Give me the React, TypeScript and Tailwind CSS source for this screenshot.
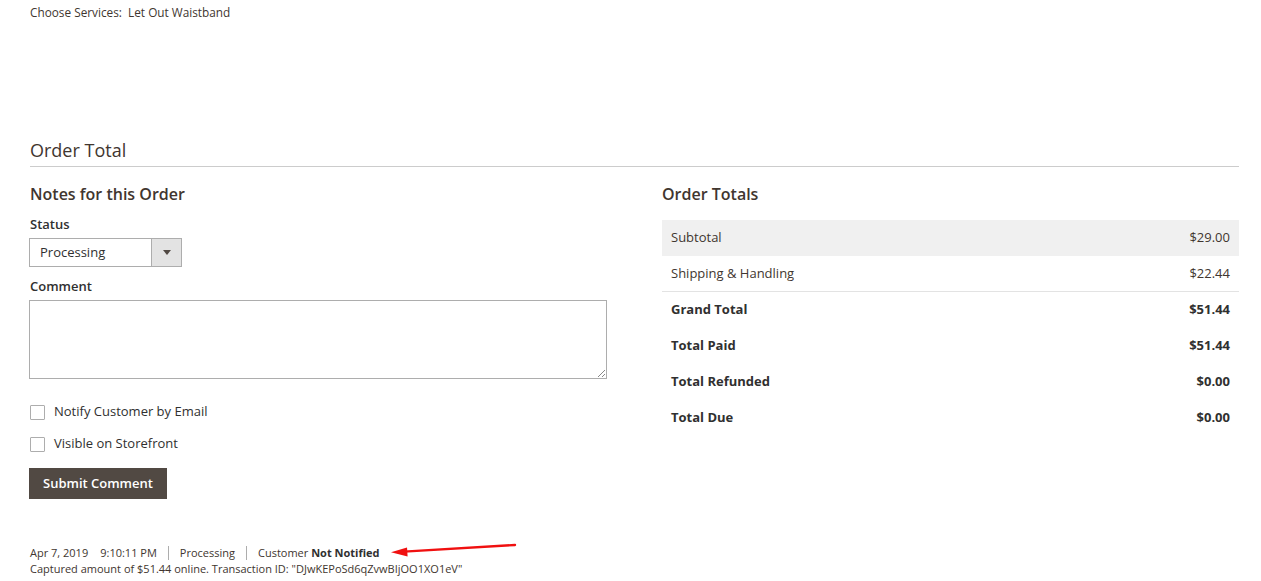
import React from "react";

const totals = [
  { label: "Subtotal", value: "$29.00", bold: false, shaded: true },
  { label: "Shipping & Handling", value: "$22.44", bold: false, shaded: false, line: true },
  { label: "Grand Total", value: "$51.44", bold: true },
  { label: "Total Paid", value: "$51.44", bold: true },
  { label: "Total Refunded", value: "$0.00", bold: true },
  { label: "Total Due", value: "$0.00", bold: true },
];

function Checkbox({ label }: { label: string }) {
  return (
    <label className="flex items-center h-[18px]">
      <span className="w-[15px] h-[15px] border border-[#adadad] bg-white rounded-[1px] mr-[9px]" />
      <span className="text-[13px] text-[#303030]">{label}</span>
    </label>
  );
}

export default function App() {
  return (
    <div
      className="min-h-screen bg-white pl-[30px] pr-[22px] text-[#303030]"
      style={{ fontFamily: '"Open Sans", "Liberation Sans", sans-serif' }}
    >
      {/* item option */}
      <div className="pt-[4px] h-[20px] text-[11.8px] leading-[16px] text-[#41362f]">
        Choose Services:&nbsp; Let Out Waistband
      </div>

      {/* ORDER TOTAL SECTION */}
      <div className="mt-[118px] border-b border-[#cccccc] pb-[3px]">
        <h2 className="text-[18px] leading-[25px] text-[#41362f]">Order Total</h2>
      </div>

      <div className="flex gap-[55px] mt-[15px]">
        {/* LEFT: notes */}
        <div className="w-[577px] shrink-0">
          <h3 className="text-[16px] leading-[24px] font-semibold text-[#41362f]">
            Notes for this Order
          </h3>

          <div className="mt-[10px] text-[13px] leading-[16px] font-semibold">Status</div>
          <div className="mt-[6px] flex w-[153px] h-[29px] border border-[#adadad] bg-white -ml-px">
            <div className="flex-1 flex items-center pl-[10px] text-[13px]">Processing</div>
            <div className="w-[30px] bg-[#e3e3e3] border-l border-[#adadad] flex items-center justify-center">
              <svg width="8" height="5" viewBox="0 0 8 5">
                <path d="M0 0h8L4 5z" fill="#514943" />
              </svg>
            </div>
          </div>

          <div className="mt-[11px] text-[13px] leading-[16px] font-semibold">Comment</div>
          <div className="mt-[6px] -ml-px w-[578px] h-[79px] border border-[#adadad] bg-white relative">
            <svg className="absolute right-[1px] bottom-[1px]" width="8" height="8" viewBox="0 0 8 8">
              <path d="M8 1L1 8M8 5L5 8" stroke="#888" strokeWidth="1" />
            </svg>
          </div>

          <div className="mt-[24px] flex flex-col gap-[14px]">
            <Checkbox label="Notify Customer by Email" />
            <Checkbox label="Visible on Storefront" />
          </div>

          <button className="mt-[15px] -ml-px h-[31px] px-[14px] bg-[#514943] text-white text-[13px] font-semibold">
            Submit Comment
          </button>

          {/* history */}
          <div className="mt-[46px] text-[11px] leading-[16px] text-[#41362f] relative">
            <div className="flex items-center">
              <span>Apr 7, 2019</span>
              <span className="ml-[12px]">9:10:11 PM</span>
              <span className="mx-[11px] w-px h-[14px] bg-[#adadad]" />
              <span>Processing</span>
              <span className="mx-[11px] w-px h-[14px] bg-[#adadad]" />
              <span>
                Customer <b className="font-bold text-[#303030]">Not Notified</b>
              </span>
            </div>
            <div>Captured amount of $51.44 online. Transaction ID: "DJwKEPoSd6qZvwBIjOO1XO1eV"</div>
            <svg className="absolute left-[360px] top-[-4px]" width="130" height="20" viewBox="0 0 130 20">
              <path d="M125 4L14 10.6" stroke="#f01010" strokeWidth="2.4" fill="none" strokeLinecap="round" />
              <path d="M1 11.3L17 6.5L17.6 15.5z" fill="#f01010" />
            </svg>
          </div>
        </div>

        {/* RIGHT: totals */}
        <div className="flex-1">
          <h3 className="text-[16px] leading-[24px] font-semibold text-[#41362f]">Order Totals</h3>
          <div className="mt-[14px]">
            {totals.map((t) => (
              <div
                key={t.label}
                className={`flex justify-between items-center h-[36px] px-[9px] text-[13px] ${
                  t.shaded ? "bg-[#f0f0f0]" : ""
                } ${t.line ? "border-b border-[#e3e3e3]" : ""} ${
                  t.bold ? "font-bold text-[#303030]" : "text-[#41362f]"
                }`}
              >
                <span>{t.label}</span>
                <span>{t.value}</span>
              </div>
            ))}
          </div>
        </div>
      </div>
    </div>
  );
}
